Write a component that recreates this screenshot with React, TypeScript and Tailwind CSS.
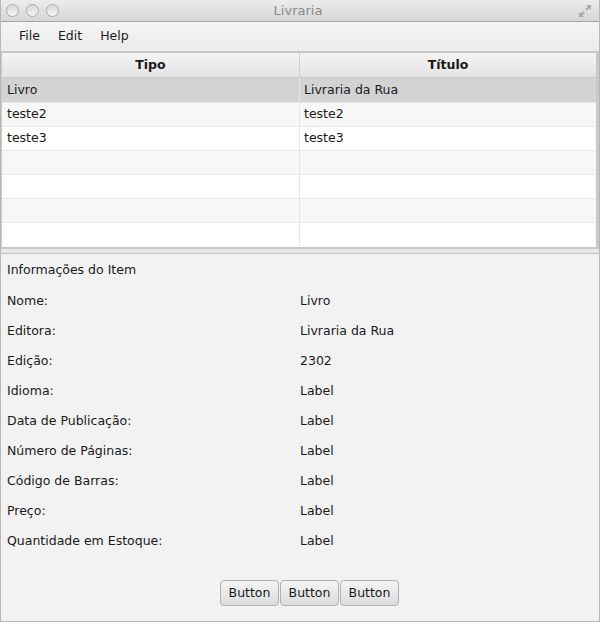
const rows = [
  ["Livro", "Livraria da Rua"],
  ["teste2", "teste2"],
  ["teste3", "teste3"],
  ["", ""],
  ["", ""],
  ["", ""],
  ["", ""],
];

const info = [
  ["Nome:", "Livro"],
  ["Editora:", "Livraria da Rua"],
  ["Edição:", "2302"],
  ["Idioma:", "Label"],
  ["Data de Publicação:", "Label"],
  ["Número de Páginas:", "Label"],
  ["Código de Barras:", "Label"],
  ["Preço:", "Label"],
  ["Quantidade em Estoque:", "Label"],
];

function Dot() {
  return (
    <div className="w-[13px] h-[13px] rounded-full border border-[#a9a9a9] bg-gradient-to-b from-[#d8d8d8] to-[#f4f4f4]"></div>
  );
}

export default function App() {
  return (
    <div
      className="w-[600px] h-[622px] flex flex-col bg-[#f2f2f2] border-l border-r border-b border-[#b8b8b8] text-[#1a1a1a] overflow-hidden"
      style={{ fontFamily: '"DejaVu Sans", sans-serif', fontSize: "12.5px" }}
    >
      {/* title bar */}
      <div className="h-[22px] flex items-center px-[5px] bg-gradient-to-b from-[#ececec] to-[#d6d6d6] border-b border-[#a5a5a5]">
        <div className="flex gap-[7px]">
          <Dot />
          <Dot />
          <Dot />
        </div>
        <div className="flex-1 text-center text-[#8a8a8a] text-[13px] pr-[40px]">Livraria</div>
        <svg width="16" height="16" viewBox="0 0 16 16" className="mr-[1px]">
          <path d="M9 2h5v5l-1.8-1.8-2.5 2.5-1.4-1.4 2.5-2.5z" fill="#a8a8a8" />
          <path d="M7 14H2V9l1.8 1.8 2.5-2.5 1.4 1.4-2.5 2.5z" fill="#a8a8a8" />
        </svg>
      </div>

      {/* menu bar */}
      <div className="h-[31px] flex items-center gap-[18px] px-[18px] bg-gradient-to-b from-[#f4f4f4] to-[#ececec] border-b-2 border-[#c6c6c6]">
        <span>File</span>
        <span>Edit</span>
        <span>Help</span>
      </div>

      {/* table */}
      <div className="h-[196px] border-l border-r-[3px] border-b-[2px] border-[#c8c8c8] bg-white">
        <div className="flex h-[25px] bg-gradient-to-b from-[#f4f4f4] to-[#e4e4e4] border-b border-[#c8c8c8] font-bold">
          <div className="w-[298px] flex items-center justify-center border-r border-[#d0d0d0]">Tipo</div>
          <div className="flex-1 flex items-center justify-center">Título</div>
        </div>
        {rows.map((r, i) => (
          <div
            key={i}
            className={
              i === 0
                ? "flex h-[24px] bg-[#d3d3d3]"
                : i % 2 === 1
                ? "flex h-[24px] bg-[#f7f7f7] border-t border-[#e8e8e8]"
                : "flex h-[24px] bg-white border-t border-[#e8e8e8]"
            }
          >
            <div className="w-[298px] flex items-center px-[5px] border-r border-[#e6e6e6]">{r[0]}</div>
            <div className="flex-1 flex items-center px-[4px]">{r[1]}</div>
          </div>
        ))}
      </div>

      {/* split divider */}
      <div className="h-[5px] bg-gradient-to-b from-[#ececec] to-[#e2e2e2] border-b border-[#c6c6c6]"></div>

      {/* info panel */}
      <div className="flex-1 flex flex-col px-[6px] pt-[1px]">
        <div className="h-[30px] flex items-center">Informações do Item</div>
        <div className="flex flex-col mt-[1px]">
          {info.map((r, i) => (
            <div key={i} className="h-[30px] flex items-center">
              <div className="w-[293px]">{r[0]}</div>
              <div>{r[1]}</div>
            </div>
          ))}
        </div>
        <div className="flex justify-center pl-[19px] mt-[24px] gap-[1px]">
          {["Button", "Button", "Button"].map((b, i) => (
            <button
              key={i}
              className="w-[59px] h-[26px] rounded-[4px] border border-[#b0b0b0] bg-gradient-to-b from-[#f4f4f4] to-[#dcdcdc]"
            >
              {b}
            </button>
          ))}
        </div>
      </div>
    </div>
  );
}
